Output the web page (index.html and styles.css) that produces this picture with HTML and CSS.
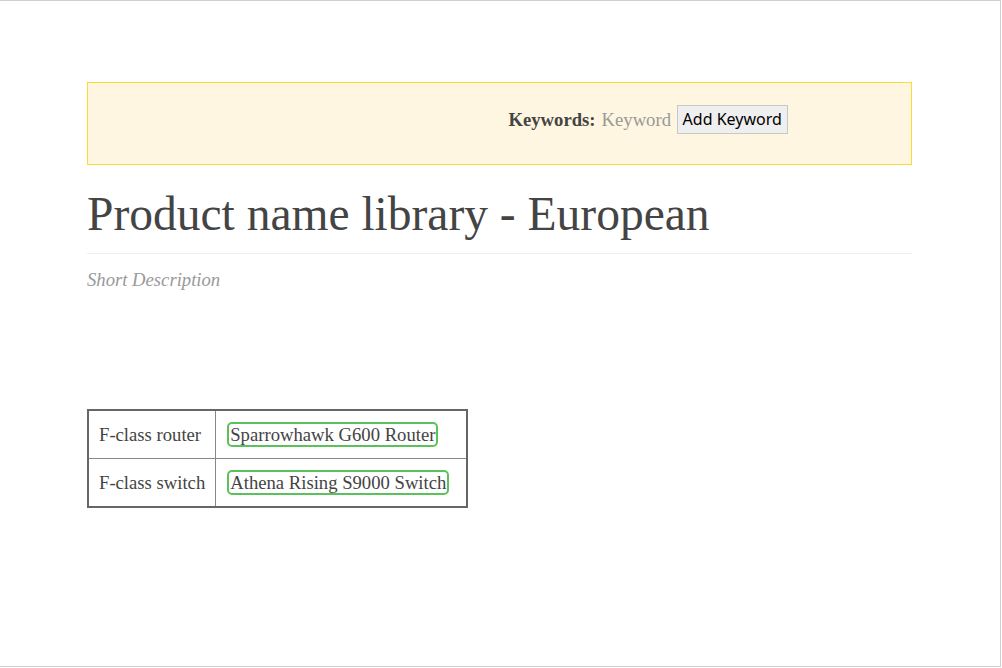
FILE: index.html
```html
<!DOCTYPE html>
<html>
<head>
<meta charset="utf-8">
<link rel="stylesheet" href="styles.css">
</head>
<body>
<div class="frame">
  <div class="page">
    <div class="keyword-bar">
      <div class="kb-left"></div>
      <div class="kb-right">
        <span class="kb-label">Keywords:</span>
        <input class="kb-input" type="text" placeholder="Keyword">
        <button class="kb-button">Add Keyword</button>
      </div>
    </div>
    <h1 class="title">Product name library - European</h1>
    <p class="desc">Short Description</p>
    <table class="names">
      <tr>
        <td class="cls">F-class router</td>
        <td class="val"><span class="tag">Sparrowhawk G600 Router</span></td>
      </tr>
      <tr>
        <td class="cls">F-class switch</td>
        <td class="val"><span class="tag">Athena Rising S9000 Switch</span></td>
      </tr>
    </table>
  </div>
</div>
</body>
</html>
```
FILE: styles.css
```css
html, body {
  margin: 0;
  padding: 0;
  background: #fff;
}
.frame {
  box-sizing: border-box;
  width: 1001px;
  height: 667px;
  border-top: 1px solid #cfcfcf;
  border-right: 1px solid #cfcfcf;
  border-bottom: 1px solid #cfcfcf;
  font-family: "Liberation Serif", "Times New Roman", serif;
  color: #444;
}
.page {
  margin-left: 87px;
  width: 825px;
  padding-top: 81px;
}
.keyword-bar {
  box-sizing: border-box;
  height: 83px;
  background: #fef6e0;
  border: 1px solid #fbdc35;
  display: grid;
  grid-template-columns: 1fr 1fr;
}
.kb-right {
  display: flex;
  align-items: center;
  padding-left: 9px;
  padding-bottom: 9px;
}
.kb-label {
  font-weight: bold;
  font-size: 18.67px;
  margin-right: 6px;
  padding-top: 2px;
}
.kb-input {
  border: none;
  background: transparent;
  font-family: "Liberation Serif", serif;
  font-size: 18.67px;
  color: #444;
  width: 69px;
  padding: 2px 0 0;
  margin-right: 6px;
}
.kb-input::placeholder {
  color: #999;
}
.kb-button {
  font-family: "Noto Sans", "Open Sans", sans-serif;
  font-size: 16px;
  color: #000;
  background: #efefef;
  border: 1px solid #c8c8c8;
  height: 29px;
  padding: 0 5px;
}
.title {
  margin: 19px 0 0;
  font-weight: normal;
  font-size: 47.5px;
  line-height: 60px;
  padding-bottom: 9px;
  border-bottom: 1px solid #eee;
}
.desc {
  margin: 15px 0 0;
  font-style: italic;
  font-size: 18.67px;
  color: #999;
}
.names {
  margin-top: 118px;
  border-collapse: collapse;
  border: 2px solid #666;
  font-size: 18.67px;
}
.names td {
  border: 1px solid #888;
  height: 47px;
  padding: 0 10px;
}
.names td.val {
  padding: 0 17px 0 11px;
}
.tag {
  display: inline-block;
  border: 2px solid #5bc25b;
  border-radius: 5px;
  line-height: 21px;
  padding: 0 1px;
}
```
